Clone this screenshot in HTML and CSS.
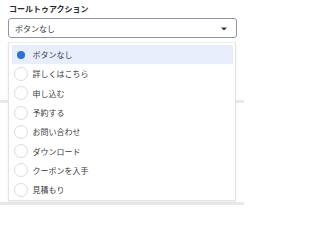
FILE: index.html
```html
<!DOCTYPE html>
<html lang="ja">
<head>
<meta charset="utf-8">
<link rel="stylesheet" href="styles.css">
</head>
<body>
<div class="page">
  <div class="rule rule-mid"></div>
  <div class="rule rule-bottom"></div>
  <div class="field">
    <div class="label">コールトゥアクション</div>
    <div class="select">
      <span class="value">ボタンなし</span>
      <svg class="caret" width="6" height="4" viewBox="0 0 6 4"><path d="M0 0.5h6L3 3.5z" fill="#333"/></svg>
    </div>
    <ul class="menu">
      <li class="opt selected"><span class="radio"></span>ボタンなし</li>
      <li class="opt"><span class="radio"></span>詳しくはこちら</li>
      <li class="opt"><span class="radio"></span>申し込む</li>
      <li class="opt"><span class="radio"></span>予約する</li>
      <li class="opt"><span class="radio"></span>お問い合わせ</li>
      <li class="opt"><span class="radio"></span>ダウンロード</li>
      <li class="opt"><span class="radio"></span>クーポンを入手</li>
      <li class="opt"><span class="radio"></span>見積もり</li>
    </ul>
  </div>
</div>
</body>
</html>
```
FILE: styles.css
```css
html, body {
  margin: 0;
  padding: 0;
  background: #fff;
}
body {
  font-family: "Noto Sans CJK JP", "Noto Sans", sans-serif;
  width: 244px;
  height: 206px;
  overflow: hidden;
}
.page {
  position: relative;
  width: 244px;
  height: 206px;
}
.rule {
  position: absolute;
  left: 0;
  right: 0;
  height: 3px;
  background: #e9e9e9;
}
.rule-mid { top: 100px; }
.rule-bottom { top: 202px; }
.field {
  position: relative;
  padding: 3px 7px 0 8px;
}
.label {
  font-size: 8px;
  font-weight: bold;
  line-height: 12px;
  height: 12px;
  padding-left: 1px;
  color: #2b2b2b;
}
.select {
  margin-top: 3px;
  height: 18px;
  border: 1px solid #8c96a8;
  border-radius: 3px;
  display: flex;
  align-items: center;
  justify-content: space-between;
  padding: 0 9px 0 6px;
  box-sizing: content-box;
}
.value {
  font-size: 8px;
  color: #3a3a3a;
}
.caret { display: block; margin-top: 1px; }
.menu {
  list-style: none;
  margin: 4px 1px 0 0;
  padding: 2px 2px 1px 3px;
  background: #fff;
  border: 1px solid #e4e4e4;
  border-top-color: #ececec;
  box-shadow: 0 1px 2px rgba(0,0,0,0.08);
}
.opt {
  height: 19.3px;
  display: flex;
  align-items: center;
  gap: 5px;
  padding-left: 1.5px;
  font-size: 8px;
  color: #3c3c3c;
}
.opt.selected {
  background: #e8eefb;
}
.radio {
  width: 12px;
  height: 12px;
  border: 1px solid #dcdcdc;
  border-radius: 50%;
  background: #fff;
  flex: none;
}
.selected .radio {
  width: 8px;
  height: 8px;
  border: 3px solid #e8eefb;
  background: #2a6fdc;
}
```
